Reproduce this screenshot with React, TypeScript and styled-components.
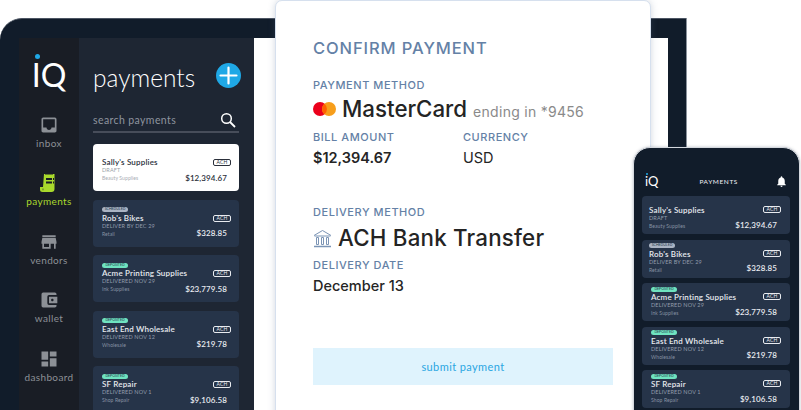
import React from "react";
import styled, { createGlobalStyle } from "styled-components";
import { MdInbox, MdStore, MdAccountBalanceWallet, MdDashboard, MdNotifications } from "react-icons/md";

const Global = createGlobalStyle`
  html, body { margin: 0; padding: 0; background: #fff; overflow: hidden; }
  * { box-sizing: border-box; }
`;

const Stage = styled.div`
  position: relative; width: 801px; height: 410px; overflow: hidden; background: #fff;
  font-family: "Lato", "Liberation Sans", sans-serif;
`;

const Tablet = styled.div`
  position: absolute; left: 0; top: 18px; width: 687px; height: 460px;
  display: flex; padding: 19px 18px 0 19px;
  background: #111c2a; border-radius: 22px 0 0 0;
  border-top: 1px solid #4c5563; border-right: 1px solid #8a929c;
`;
const Sidebar = styled.nav`
  width: 60px; flex: none; background: #191d25;
  display: flex; flex-direction: column; align-items: center; padding-top: 21px;
`;
const Logo = styled.div<{ $small?: boolean }>`
  position: relative; color: #fff; font-weight: 400; line-height: 1;
  font-size: ${(p) => (p.$small ? 13 : 32)}px;
  height: ${(p) => (p.$small ? 13 : 32)}px;
`;
const LogoDot = styled.span<{ $small?: boolean }>`
  position: absolute; border-radius: 50%; background: #1fa8e6;
  left: ${(p) => (p.$small ? 1 : 3)}px; top: ${(p) => (p.$small ? -2 : -5)}px;
  width: ${(p) => (p.$small ? 2 : 5)}px; height: ${(p) => (p.$small ? 2 : 5)}px;
`;
const NavList = styled.div`
  display: flex; flex-direction: column; align-items: center; margin-top: 24px; gap: 0;
`;
const NavItem = styled.div<{ $active?: boolean }>`
  height: 58.4px; display: flex; flex-direction: column; align-items: center;
  color: ${(p) => (p.$active ? "#a9d92c" : "#8c9096")};
  font-size: 10px; line-height: 12px; letter-spacing: .35px; font-weight: 400;
  svg { display: block; width: 20px; height: 20px; margin-bottom: 2px; margin-top: 0; }
`;
const ListPanel = styled.section`
  width: 175px; flex: none; background: #1e2633; padding: 25px 15px 0 14px;
`;
const TitleRow = styled.div`
  display: flex; align-items: center; justify-content: space-between; height: 30px;
`;
const PageTitle = styled.h1`
  margin: 0; color: #fff; font-weight: 300; font-size: 24.5px; letter-spacing: 0; line-height: 30px;
`;
const PlusButton = styled.div`
  width: 25px; height: 25px; border-radius: 50%; background: #1fa8e6; margin-right: -2px; margin-top: -6px;
  display: grid; place-items: center;
`;
const SearchRow = styled.div`
  margin-top: 14px; height: 26px; padding: 4px 0 2px; border-bottom: 2px solid #474d5a;
  display: flex; align-items: center; justify-content: space-between;
  color: #8e949f; font-size: 10.5px; letter-spacing: .4px;
  svg { margin-right: 3px; }
`;
const Cards = styled.div<{ $compact?: boolean }>`
  display: flex; flex-direction: column;
  gap: ${(p) => (p.$compact ? 5.5 : 8.5)}px;
  margin-top: ${(p) => (p.$compact ? 0 : 11)}px;
`;
const Card = styled.article<{ $selected?: boolean; $compact?: boolean; $inset?: boolean }>`
  position: relative; flex: none; display: flex; justify-content: space-between;
  height: ${(p) => (p.$compact ? 38 : 47)}px; border-radius: 4px;
  padding: ${(p) => (p.$compact ? "3px 9px 0 " + (p.$inset ? 9 : 7) + "px" : "7px 8px 0 9px")};
  background: ${(p) => (p.$selected ? "#fff" : "#263449")};
  color: ${(p) => (p.$selected ? "#2a2f3a" : "#e8ebf0")};
`;
const CardLeft = styled.div`display: flex; flex-direction: column; align-items: flex-start; min-width: 0;`;
const CardRight = styled.div<{ $compact?: boolean }>`
  display: flex; flex-direction: column; align-items: flex-end; justify-content: flex-start;
  padding-top: ${(p) => (p.$compact ? 7 : 8)}px;
`;
const StatusSlot = styled.div`height: 6px; display: flex; align-items: center; margin-bottom: 1px;`;
const Status = styled.span<{ $kind: string }>`
  height: 5px; width: 26px; border-radius: 3px; font-size: 3.5px; line-height: 5px; text-align: center;
  background: ${(p) => (p.$kind === "DEPOSITED" ? "#6fe3c0" : "#aab4c4")};
  color: #24364a;
`;
const CardName = styled.div`
  font-size: 8px; line-height: 9px; font-weight: 600; letter-spacing: .18px; white-space: nowrap;
`;
const CardSub = styled.div<{ $selected?: boolean }>`
  font-size: 5.5px; line-height: 7px; letter-spacing: .15px; white-space: nowrap;
  color: ${(p) => (p.$selected ? "#9a9fa8" : "#939dac")};
`;
const CardCat = styled.div<{ $selected?: boolean }>`
  font-size: 5px; line-height: 7px; margin-top: 1px; letter-spacing: .1px; white-space: nowrap;
  color: ${(p) => (p.$selected ? "#a8acb3" : "#8793a4")};
`;
const Ach = styled.span`
  width: 18px; height: 7px; border: .8px solid currentColor; border-radius: 2px;
  font-size: 5px; line-height: 5.4px; text-align: center; font-weight: 400; letter-spacing: .2px;
`;
const Amount = styled.div<{ $compact?: boolean }>`
  font-size: 8px; line-height: 9px; font-weight: 600; letter-spacing: .1px; white-space: nowrap;
  margin: 7.500px 4px 0 0;
`;
const Screen = styled.div`flex: 1; background: #fff;`;

const Confirm = styled.main`
  position: absolute; left: 275px; top: 0; width: 376px; height: 430px;
  background: #fff; border: 1px solid #d6e0ee; border-radius: 7px 7px 0 0;
  box-shadow: 0 0 7px rgba(90,110,140,.28);
  padding: 37px 37px 0 37px;
  font-family: "Inter", "Liberation Sans", sans-serif;
`;
const ConfirmTitle = styled.h2`
  margin: 0; color: #6481a6; font-size: 16.5px; line-height: 20px; font-weight: 500; letter-spacing: .9px;
`;
const Label = styled.div`
  color: #6481a6; font-size: 11px; line-height: 14px; font-weight: 500; letter-spacing: .55px;
`;
const BigRow = styled.div<{ $top: number }>`
  display: flex; align-items: center; height: 28px; margin-top: ${(p) => p.$top}px;
`;
const BigText = styled.span<{ $spread?: boolean }>`
  color: #242424; font-size: 22.3px; font-weight: 500; line-height: 28px; white-space: nowrap;
  letter-spacing: ${(p) => (p.$spread ? 0.22 : 0)}px;
`;
const Ending = styled.span`
  color: #8a8a8a; font-size: 14px; margin-left: 6px; margin-top: 5px; letter-spacing: .28px; white-space: nowrap;
`;
const TwoCols = styled.div`display: grid; grid-template-columns: 150px 1fr; margin-top: 7px;`;
const Value = styled.div<{ $weight?: number }>`
  color: #252525; font-size: 14.5px; line-height: 20px; margin-top: 4px;
  font-weight: ${(p) => p.$weight ?? 400};
`;
const MethodBlock = styled.div<{ $gap: number }>`margin-top: ${(p) => p.$gap}px;`;
const Submit = styled.button`
  display: block; width: 300px; height: 37px; margin-top: 52px; border: 0; background: #dff3fd; color: #2aa6e2;
  font-family: "Lato", "Liberation Sans", sans-serif; font-size: 11px; letter-spacing: .4px;
`;

const Phone = styled.aside`
  position: absolute; left: 633px; top: 147px; width: 167px; height: 300px;
  background: #111c2a; border: 1.5px solid #d4d8de; border-radius: 17px 17px 0 0;
  padding: 0 9px 0 8px; box-shadow: 0 0 3px rgba(80,90,110,.35);
`;
const PhoneHeader = styled.header`
  display: flex; align-items: center; justify-content: space-between; height: 48px; padding: 18px 2px 0 3px;
  color: #fff;
`;
const PhoneTitle = styled.div`
  font-size: 6.5px; letter-spacing: .6px; font-weight: 500; color: #e8eaee; margin-left: 4px;
`;

const Receipt = () => (
  <svg viewBox="0 0 20 20" fill="currentColor" aria-hidden>
    <path d="M5 1h1l1 1 1-1 1 1 1-1 1 1 1-1 1 1 1-1h1.500v15a3 3 0 0 1-3 3H3.500A2.500 2.500 0 0 1 1 16.500V14h3z" />
    <path d="M7 5h6v2H7zM14 5h1v2h-1zM7 8.500h6v2H7zM14 8.500h1v2h-1z" fill="#191d25" />
    <path d="M5 15.500H3v1a1 1 0 0 0 2 0z" fill="#191d25" opacity=".3" />
  </svg>
);
const SearchIcon = () => (
  <svg width="16" height="16" viewBox="0 0 16 16" fill="none" stroke="#fff" strokeWidth="1.500" aria-hidden>
    <circle cx="6.500" cy="6.500" r="4.800" />
    <path d="M10 10l5 5" strokeWidth="1.800" />
  </svg>
);
const PlusIcon = () => (
  <svg width="19" height="19" viewBox="0 0 19 19" stroke="#fff" strokeWidth="2.200" strokeLinecap="round" aria-hidden>
    <path d="M9.500 1.500v16M1.500 9.500h16" />
  </svg>
);
const MasterCard = () => (
  <svg width="23" height="14" viewBox="0 0 23 14" style={{ marginRight: 6 }} aria-hidden>
    <circle cx="7" cy="7" r="7" fill="#eb001b" />
    <circle cx="16" cy="7" r="7" fill="#f79e1b" />
    <path d="M11.500 1.700a7 7 0 0 1 0 10.600a7 7 0 0 1 0-10.600z" fill="#ff5f00" />
  </svg>
);
const BankIcon = () => (
  <svg width="19" height="19" viewBox="0 0 19 19" fill="none" stroke="#7b94b5" strokeWidth="1" style={{ marginRight: 6 }} aria-hidden>
    <path d="M1 6.500L9.500 1.500 18 6.500" />
    <path d="M1.500 7h16" />
    <path d="M3.500 8.500v7h2v-7zM8.500 8.500v7h2v-7zM13.500 8.500v7h2v-7z" />
    <path d="M1 17.500h17" strokeWidth="1.500" />
  </svg>
);

type Row = { name: string; sub: string; cat: string; amount: string; status?: string };
const rows: Row[] = [
  { name: "Sally's Supplies", sub: "DRAFT", cat: "Beauty Supplies", amount: "$12,394.67" },
  { name: "Rob's Bikes", sub: "DELIVER BY DEC 29", cat: "Retail", amount: "$328.85", status: "SCHEDULED" },
  { name: "Acme Printing Supplies", sub: "DELIVERED NOV 29", cat: "Ink Supplies", amount: "$23,779.58", status: "DEPOSITED" },
  { name: "East End Wholesale", sub: "DELIVERED NOV 12", cat: "Wholesale", amount: "$219.78", status: "DEPOSITED" },
  { name: "SF Repair", sub: "DELIVERED NOV 1", cat: "Shop Repair", amount: "$9,106.58", status: "DEPOSITED" },
];

const PaymentCard = ({ row, selected, compact, inset }: { row: Row; selected?: boolean; compact?: boolean; inset?: boolean }) => (
  <Card $selected={selected} $compact={compact} $inset={inset}>
    <CardLeft>
      <StatusSlot>{row.status && <Status $kind={row.status}>{row.status}</Status>}</StatusSlot>
      <CardName>{row.name}</CardName>
      <CardSub $selected={selected}>{row.sub}</CardSub>
      <CardCat $selected={selected}>{row.cat}</CardCat>
    </CardLeft>
    <CardRight $compact={compact}>
      <Ach>ACH</Ach>
      <Amount $compact={compact}>{row.amount}</Amount>
    </CardRight>
  </Card>
);

export default function App() {
  return (
    <Stage>
      <Global />
      <Tablet>
        <Sidebar>
          <Logo>IQ<LogoDot /></Logo>
          <NavList>
            <NavItem><MdInbox />inbox</NavItem>
            <NavItem $active><Receipt />payments</NavItem>
            <NavItem><MdStore />vendors</NavItem>
            <NavItem><MdAccountBalanceWallet />wallet</NavItem>
            <NavItem><MdDashboard />dashboard</NavItem>
          </NavList>
        </Sidebar>
        <ListPanel>
          <TitleRow>
            <PageTitle>payments</PageTitle>
            <PlusButton><PlusIcon /></PlusButton>
          </TitleRow>
          <SearchRow>search payments<SearchIcon /></SearchRow>
          <Cards>
            {rows.map((r, i) => <PaymentCard key={r.name} row={r} selected={i === 0} />)}
          </Cards>
        </ListPanel>
        <Screen />
      </Tablet>
      <Confirm>
        <ConfirmTitle>CONFIRM PAYMENT</ConfirmTitle>
        <MethodBlock $gap={20}>
          <Label>PAYMENT METHOD</Label>
          <BigRow $top={3}>
            <MasterCard />
            <BigText>MasterCard</BigText>
            <Ending>ending in *9456</Ending>
          </BigRow>
        </MethodBlock>
        <TwoCols>
          <div><Label>BILL AMOUNT</Label><Value $weight={600}>$12,394.67</Value></div>
          <div><Label>CURRENCY</Label><Value>USD</Value></div>
        </TwoCols>
        <MethodBlock $gap={37}>
          <Label>DELIVERY METHOD</Label>
          <BigRow $top={5}><BankIcon /><BigText $spread>ACH Bank Transfer</BigText></BigRow>
        </MethodBlock>
        <MethodBlock $gap={6}>
          <Label>DELIVERY DATE</Label>
          <Value $weight={500}>December 13</Value>
        </MethodBlock>
        <Submit>submit payment</Submit>
      </Confirm>
      <Phone>
        <PhoneHeader>
          <Logo $small>iQ<LogoDot $small /></Logo>
          <PhoneTitle>PAYMENTS</PhoneTitle>
          <MdNotifications size={13} />
        </PhoneHeader>
        <Cards $compact>
          {rows.map((r, i) => <PaymentCard key={r.name} row={r} compact inset={i > 1} />)}
        </Cards>
      </Phone>
    </Stage>
  );
}
